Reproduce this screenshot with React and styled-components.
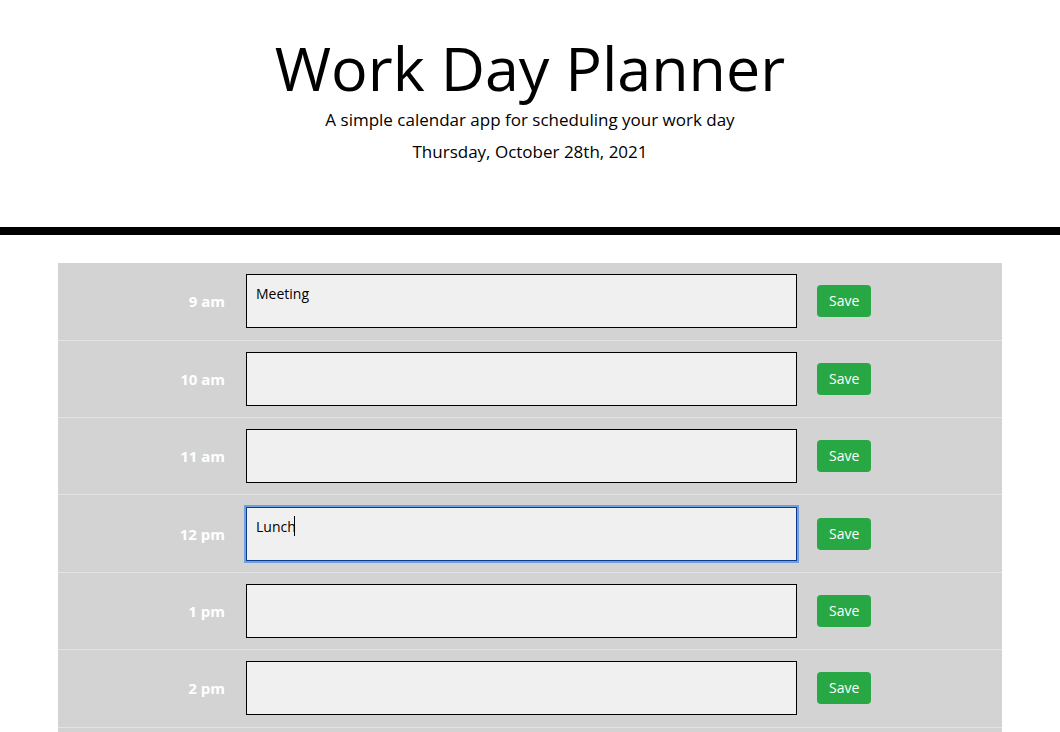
import React from "react";
import styled, { createGlobalStyle } from "styled-components";

const HOURS = [
  { label: "9 am", text: "Meeting" },
  { label: "10 am", text: "" },
  { label: "11 am", text: "" },
  { label: "12 pm", text: "Lunch", focused: true },
  { label: "1 pm", text: "" },
  { label: "2 pm", text: "" },
  { label: "3 pm", text: "" },
];

function App() {
  return (
    <>
      <GlobalStyle />
      <Header>
        <Title>Work Day Planner</Title>
        <Lead>A simple calendar app for scheduling your work day</Lead>
        <CurrentDay>Thursday, October 28th, 2021</CurrentDay>
      </Header>

      <Container>
        {HOURS.map((hour) => (
          <Row key={hour.label}>
            <Hour>{hour.label}</Hour>
            <NoteWrap>
              <Note defaultValue={hour.text} $focused={hour.focused} />
              {hour.focused && <Caret />}
            </NoteWrap>
            <SaveButton>Save</SaveButton>
          </Row>
        ))}
      </Container>
    </>
  );
}

const GlobalStyle = createGlobalStyle`
  * {
    box-sizing: border-box;
  }
  body {
    margin: 0;
    font-family: "Open Sans", "Liberation Sans", sans-serif;
    color: #000;
    background: #fff;
  }
`;

const Header = styled.header`
  padding: 31px 0 63px;
  text-align: center;
  border-bottom: 8px solid #000;
`;

const Title = styled.h1`
  margin: 0;
  font-size: 61px;
  font-weight: 400;
  line-height: 1.2;
`;

const Lead = styled.p`
  margin: 4px 0 0;
  font-size: 17px;
  line-height: 24px;
`;

const CurrentDay = styled.p`
  margin: 8px 0 0;
  font-size: 17px;
  line-height: 24px;
`;

const Container = styled.main`
  width: 944px;
  margin: 28px auto 0;
  background: #d3d3d3;
`;

const Row = styled.div`
  display: flex;
  align-items: center;
  height: 77.4px;
  border-bottom: 1px solid #e3e3e3;
`;

const Hour = styled.div`
  width: 188px;
  padding-right: 21px;
  text-align: right;
  color: #fff;
  font-weight: 700;
  font-size: 15px;
`;

const NoteWrap = styled.div`
  position: relative;
  display: flex;
`;

const Note = styled.textarea`
  width: 551px;
  height: 54px;
  padding: 9px 9px;
  resize: none;
  font-family: "Open Sans", "Liberation Sans", sans-serif;
  font-size: 14px;
  line-height: 20px;
  color: #000;
  background: #f0f0f0;
  border: 1px solid ${(p) => (p.$focused ? "#0d3b8c" : "#000")};
  box-shadow: ${(p) => (p.$focused ? "0 0 0 2px #6f9fdf" : "none")};
  border-radius: 0;
  outline: none;
`;

const Caret = styled.span`
  position: absolute;
  left: 48px;
  top: 9px;
  width: 1px;
  height: 20px;
  background: #000;
`;

const SaveButton = styled.button`
  margin-left: 20px;
  padding: 6px 12px;
  font-family: "Open Sans", "Liberation Sans", sans-serif;
  font-size: 14px;
  line-height: 20px;
  color: #fff;
  background: #28a745;
  border: 0;
  border-radius: 4px;
  cursor: pointer;
`;

export default App;
